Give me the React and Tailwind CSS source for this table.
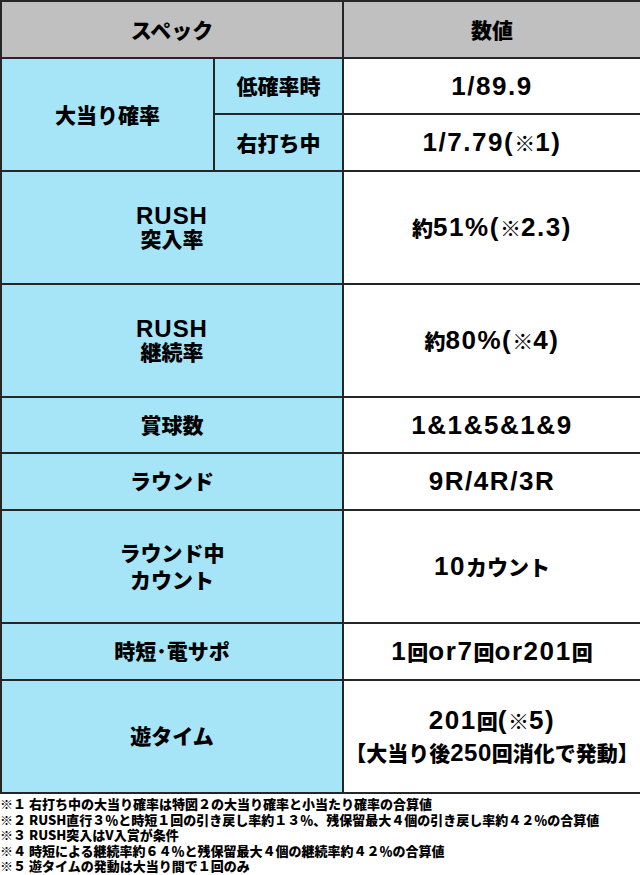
import React from 'react';

const CJK = /([\u3000-\u30ff\u3400-\u9fff\uff00-\uffef※【】・･]+)/;

// Latin runs in Liberation Sans, Japanese runs in Noto Sans CJK at their own size
function Mixed({ text, lat = 'text-[24px] tracking-[0.04em]', cjk = 'text-[21px]' }) {
    return text.split(CJK).filter(Boolean).map((part, i) =>
        CJK.test(part)
            ? <span key={i} className={`${cjk} font-black`}>{part}</span>
            : <span key={i} className={lat}>{part}</span>
    );
}

const cellBase = "border-2 border-[#262626] text-center align-middle font-bold text-black whitespace-nowrap";
const blue = "bg-[#a6e4f7]";
const VAL_LAT = 'text-[26px] tracking-[0.06em]';

const ROWS = [
    { label: ['RUSH', '突入率'], value: ['約51%(※2.3)'], h: 'h-[113px]', lh: 'leading-[23px]' },
    { label: ['RUSH', '継続率'], value: ['約80%(※4)'], h: 'h-[113px]', lh: 'leading-[23px]' },
    { label: ['賞球数'], value: ['1&1&5&1&9'], h: 'h-[56px]', lh: 'leading-[26px]' },
    { label: ['ラウンド'], value: ['9R/4R/3R'], h: 'h-[57px]', lh: 'leading-[26px]' },
    { label: ['ラウンド中', 'カウント'], value: ['10カウント'], h: 'h-[113px]', lh: 'leading-[26px]' },
    { label: ['時短･電サポ'], value: ['1回or7回or201回'], h: 'h-[57px]', lh: 'leading-[26px]' },
    { label: ['遊タイム'], value: ['201回(※5)', '【大当り後250回消化で発動】'], h: 'h-[113px]', lh: 'leading-[26px]' },
];

const NOTES = [
    '※１ 右打ち中の大当り確率は特図２の大当り確率と小当たり確率の合算値',
    '※２ RUSH直行３％と時短１回の引き戻し率約１３％、残保留最大４個の引き戻し率約４２％の合算値',
    '※３ RUSH突入はV入賞が条件',
    '※４ 時短による継続率約６４％と残保留最大４個の継続率約４２％の合算値',
    '※５ 遊タイムの発動は大当り間で１回のみ',
];

function Lines({ lines, lh, lat }) {
    return (
        <div className={`flex flex-col items-center ${lh}`}>
            {lines.map((l, i) => (
                <div key={i}>
                    <Mixed text={l} lat={i > 0 ? 'text-[24px] tracking-[0.02em]' : lat} />
                </div>
            ))}
        </div>
    );
}

export default function App() {
    return (
        <div className="w-[640px] h-[875px] overflow-hidden bg-white font-['Liberation_Sans','Noto_Sans_CJK_JP',sans-serif] text-[24px]">
            <table className="w-[640px] border-collapse table-fixed">
                <colgroup>
                    <col className="w-[213px]" />
                    <col className="w-[129px]" />
                    <col className="w-[298px]" />
                </colgroup>
                <tbody>
                    <tr className="h-[57px] bg-[#c0c0c0]">
                        <td colSpan={2} className={cellBase}><Mixed text="スペック" /></td>
                        <td className={cellBase}><Mixed text="数値" /></td>
                    </tr>
                    <tr className="h-[56px]">
                        <td rowSpan={2} className={`${cellBase} ${blue}`}><Mixed text="大当り確率" /></td>
                        <td className={`${cellBase} ${blue}`}><Mixed text="低確率時" /></td>
                        <td className={cellBase}><Mixed text="1/89.9" lat={VAL_LAT} /></td>
                    </tr>
                    <tr className="h-[57px]">
                        <td className={`${cellBase} ${blue}`}><Mixed text="右打ち中" /></td>
                        <td className={cellBase}><Mixed text="1/7.79(※1)" lat={VAL_LAT} /></td>
                    </tr>
                    {ROWS.map((r, i) => (
                        <tr key={i} className={r.h}>
                            <td colSpan={2} className={`${cellBase} ${blue}`}><Lines lines={r.label} lh={r.lh} /></td>
                            <td className={cellBase}>
                                <Lines lines={r.value} lh={r.value.length > 1 ? 'leading-[31px]' : 'leading-[26px]'} lat={VAL_LAT} />
                            </td>
                        </tr>
                    ))}
                </tbody>
            </table>
            <div className="pt-[2px] font-['Noto_Sans_CJK_JP',sans-serif] font-black text-[13px] leading-[15.6px] text-black">
                {NOTES.map((n, i) => <div key={i} className="whitespace-nowrap">{n}</div>)}
            </div>
        </div>
    );
}
